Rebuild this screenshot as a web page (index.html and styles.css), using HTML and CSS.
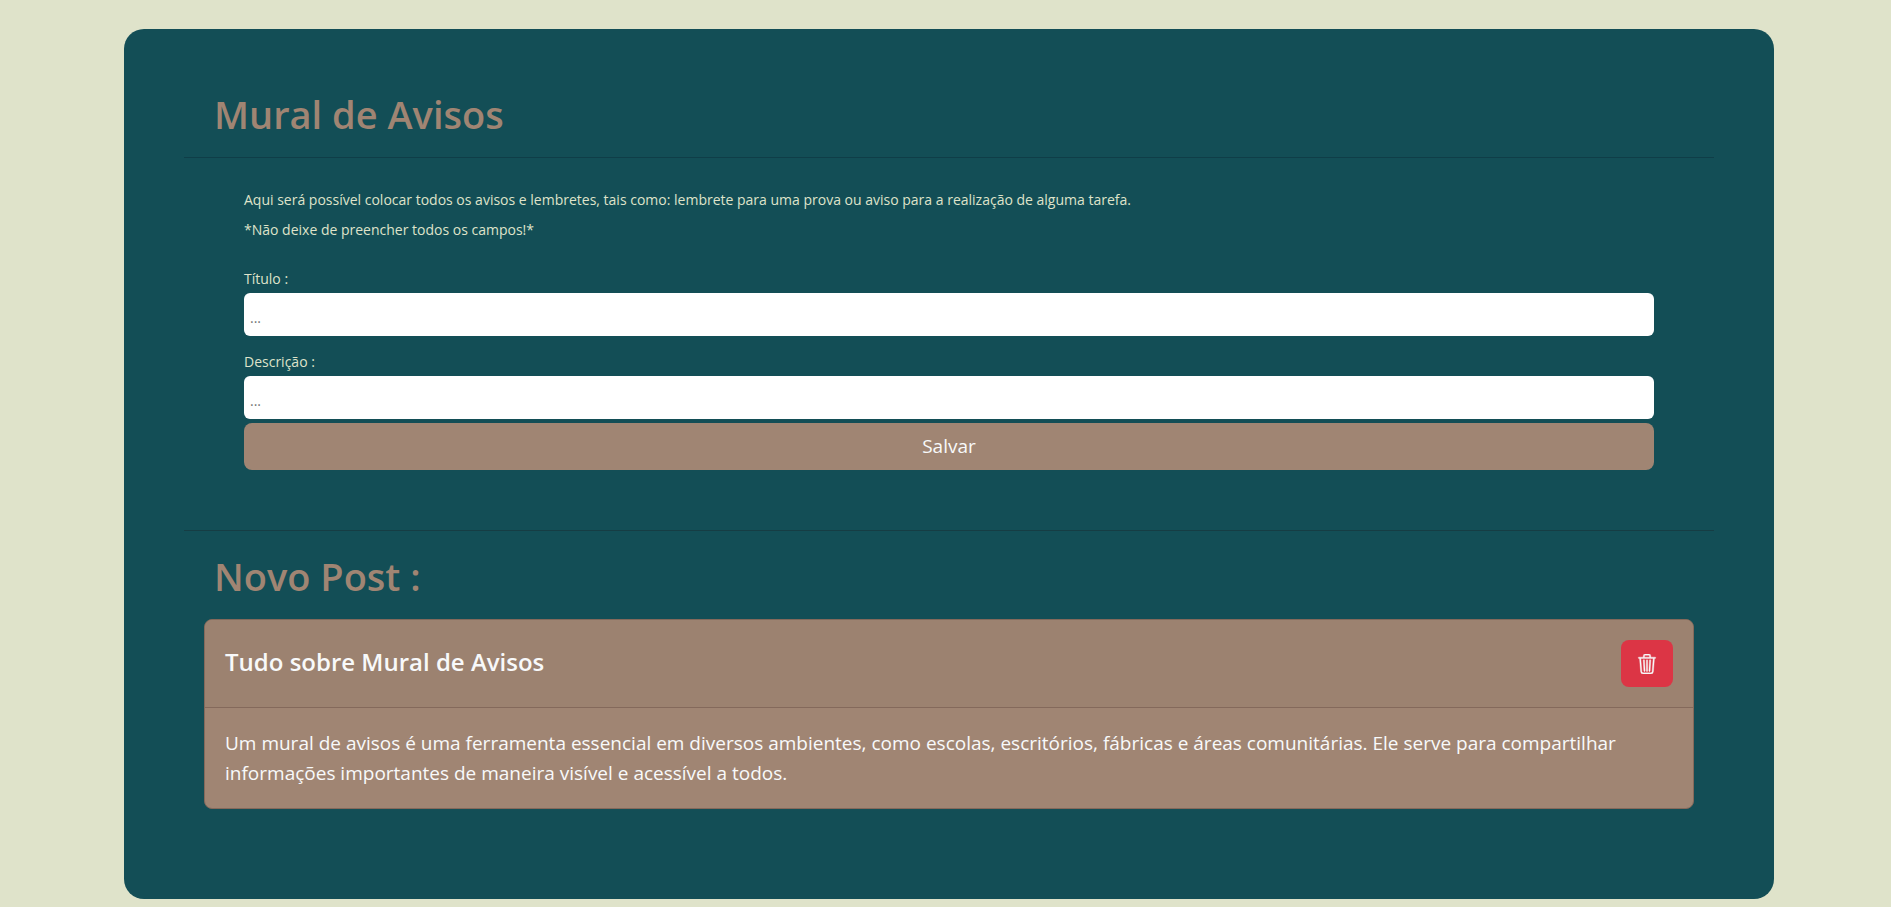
FILE: index.html
```html
<!DOCTYPE html>
<html lang="pt-BR">
<head>
<meta charset="utf-8">
<meta name="viewport" content="width=device-width, initial-scale=1">
<title>Mural de Avisos</title>
<link rel="stylesheet" href="styles.css">
</head>
<body>
<main class="panel">
  <header class="panel-header">
    <h1 class="heading">Mural de Avisos</h1>
  </header>
  <section class="notice">
    <div class="intro">
      <p>Aqui será possível colocar todos os avisos e lembretes, tais como: lembrete para uma prova ou aviso para a realização de alguma tarefa.</p>
      <p>*Não deixe de preencher todos os campos!*</p>
    </div>
    <form class="form">
      <div class="field">
        <label class="label" for="titulo">Título :</label>
        <input class="input" id="titulo" type="text" placeholder="...">
      </div>
      <div class="field">
        <label class="label" for="descricao">Descrição :</label>
        <input class="input" id="descricao" type="text" placeholder="...">
      </div>
      <button class="button save" type="button">Salvar</button>
    </form>
  </section>
  <section class="posts">
    <h2 class="heading">Novo Post :</h2>
    <article class="card">
      <header class="card-header">
        <h3 class="card-title">Tudo sobre Mural de Avisos</h3>
        <button class="button delete" type="button" aria-label="Excluir">
          <svg width="20" height="20" viewBox="0 0 16 16" fill="currentColor" stroke="currentColor" stroke-width=".3" aria-hidden="true"><path d="M6.5 1h3a.5.5 0 0 1 .5.5v1H6v-1a.5.5 0 0 1 .5-.5M11 2.5v-1A1.5 1.5 0 0 0 9.5 0h-3A1.5 1.5 0 0 0 5 1.5v1H1.5a.5.5 0 0 0 0 1h.538l.853 10.66A2 2 0 0 0 4.885 16h6.23a2 2 0 0 0 1.994-1.84l.853-10.66h.538a.5.5 0 0 0 0-1zm1.958 1-.846 10.58a1 1 0 0 1-.997.92h-6.23a1 1 0 0 1-.997-.92L3.042 3.5zm-7.487 1a.5.5 0 0 1 .528.47l.5 8.5a.5.5 0 0 1-.998.06L5 5.03a.5.5 0 0 1 .47-.53Zm5.058 0a.5.5 0 0 1 .47.53l-.5 8.5a.5.5 0 1 1-.998-.06l.5-8.5a.5.5 0 0 1 .528-.47M8 4.5a.5.5 0 0 1 .5.5v8.5a.5.5 0 0 1-1 0V5a.5.5 0 0 1 .5-.5"/></svg>
        </button>
      </header>
      <p class="card-body">Um mural de avisos é uma ferramenta essencial em diversos ambientes, como escolas, escritórios, fábricas e áreas comunitárias. Ele serve para compartilhar informações importantes de maneira visível e acessível a todos.</p>
    </article>
  </section>
</main>
</body>
</html>
```
FILE: styles.css
```css
* {
  box-sizing: border-box;
}

body {
  margin: 0;
  padding: 29px 117px 8px 124px;
  background: #dfe3ca;
  color: #dfe3ca;
  font-family: "Segoe UI", "Open Sans", "Noto Sans", sans-serif;
  font-size: 14px;
  line-height: 30px;
}

h1, h2, h3, p {
  margin: 0;
}

.panel {
  padding: 60px 60px 90px;
  border-radius: 20px;
  background: #134e56;
}

.heading {
  padding: 0 30px;
  color: #a08573;
  font-size: 38px;
  font-weight: 600;
  line-height: 50px;
}

.panel-header {
  padding-bottom: 18px;
}

.notice {
  padding: 27px 60px 60px;
  border-top: 1px solid #0f3e48;
  border-bottom: 1px solid #163d44;
}

.intro {
  padding-bottom: 20px;
}

.form {
  display: flex;
  flex-direction: column;
}

.field {
  display: flex;
  flex-direction: column;
  padding-bottom: 12px;
}

.field + .field {
  padding-bottom: 4px;
}

.label {
  line-height: 28px;
}

.input {
  width: 100%;
  height: 43px;
  padding: 6px 6px 0;
  border: 0;
  border-radius: 6px;
  background: #fff;
  color: #212529;
  font: inherit;
  line-height: 24px;
}

.input::placeholder {
  color: #757575;
}

.button {
  border: 0;
  border-radius: 8px;
  color: #f8f9fa;
  font: inherit;
  cursor: pointer;
}

.save {
  padding: 8px 16px;
  background: #a08573;
  font-size: 19px;
  line-height: 31px;
}

.posts {
  padding: 20px 20px 0;
}

.posts .heading {
  padding: 0 10px 18px;
}

.card {
  border: 1px solid #84695b;
  border-radius: 8px;
  background: #a08573;
  color: #f8f9fa;
}

.card-header {
  display: flex;
  align-items: center;
  justify-content: space-between;
  padding: 20px;
  border-bottom: 1px solid #84695b;
  border-radius: 7px 7px 0 0;
  background: #9c8270;
}

.card-title {
  padding-bottom: 4px;
  font-size: 24px;
  font-weight: 600;
  line-height: 30px;
}

.delete {
  display: flex;
  padding: 14px 16px 13px;
  background: #dc3545;
}

.card-body {
  padding: 20px;
  font-size: 19px;
  line-height: 30px;
}
```
